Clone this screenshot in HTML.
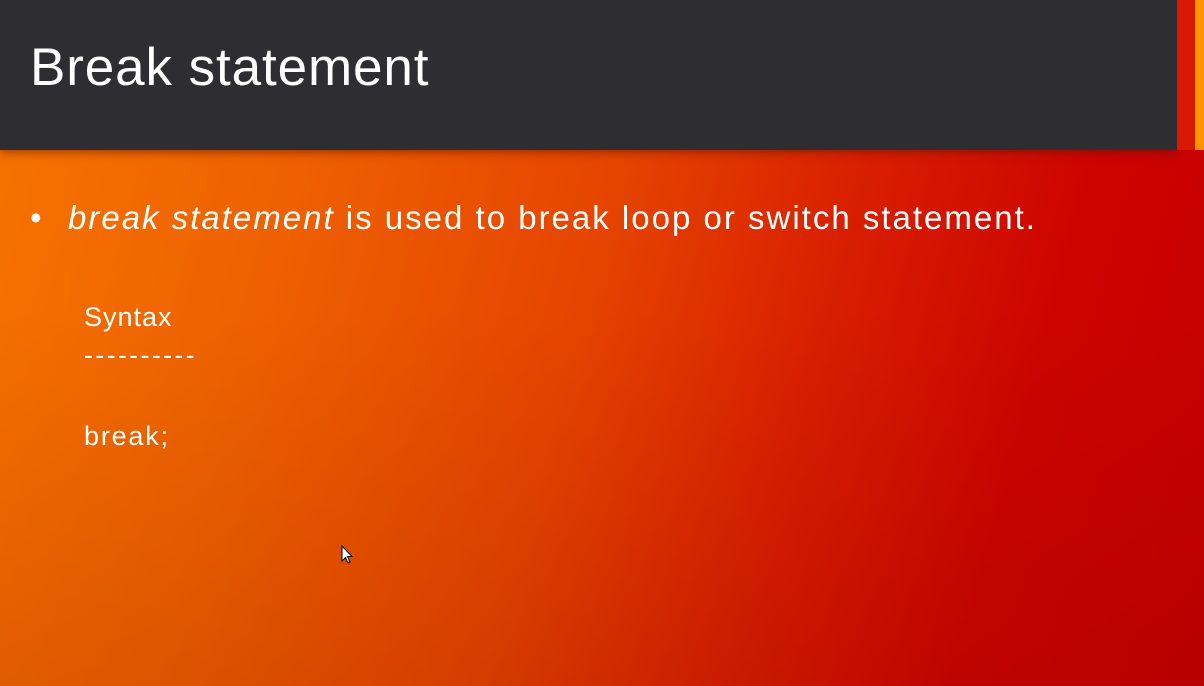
<!DOCTYPE html>
<html><head><style>
body{margin:0;width:1204px;height:686px;overflow:hidden;position:relative;font-family:"Liberation Sans",sans-serif;color:#fff;
background:linear-gradient(105deg,#f67400 0%,#ee6000 25%,#e54400 48%,#d81e00 66%,#cc0400 82%,#c40000 100%);}
.shade{position:absolute;inset:0;background:linear-gradient(180deg,rgba(0,0,0,0) 45%,rgba(90,0,0,0.12) 100%);}
.hdr{position:absolute;left:0;top:0;width:1177px;height:150px;background:#2e2d31;box-shadow:0 3px 8px rgba(90,20,0,.5);}
.r1{position:absolute;left:1177px;top:0;width:18px;height:150px;background:#d81800;}
.r2{position:absolute;left:1195px;top:0;width:9px;height:150px;background:#ff9200;}
h1{position:absolute;left:30px;top:38px;margin:0;font-weight:normal;font-size:53px;letter-spacing:0.9px;line-height:60px;}
.bul{position:absolute;left:30px;top:198px;font-size:33px;line-height:40px;}
.b{position:absolute;left:68px;top:198px;font-size:33px;line-height:40px;letter-spacing:2px;white-space:nowrap;}
.t{position:absolute;left:84px;font-size:27px;line-height:30px;letter-spacing:1px;}
</style></head><body>
<div class="shade"></div>
<div class="hdr"></div><div class="r1"></div><div class="r2"></div>
<h1>Break statement</h1>
<div class="bul">•</div>
<div class="b"><i>break statement</i> is used to break loop or switch statement.</div>
<div class="t" style="top:302px">Syntax</div>
<div class="t" style="top:340px;letter-spacing:2.3px">----------</div>
<div class="t" style="top:421px;letter-spacing:1.8px">break;</div>
<svg style="position:absolute;left:341px;top:545px" width="14" height="20" viewBox="0 0 14 20"><path d="M1 1 L1 16 L4.5 12.5 L7 18 L9 17 L6.5 11.5 L11 11.5 Z" fill="#fff" stroke="#000" stroke-width="1"/></svg>
</body></html>
